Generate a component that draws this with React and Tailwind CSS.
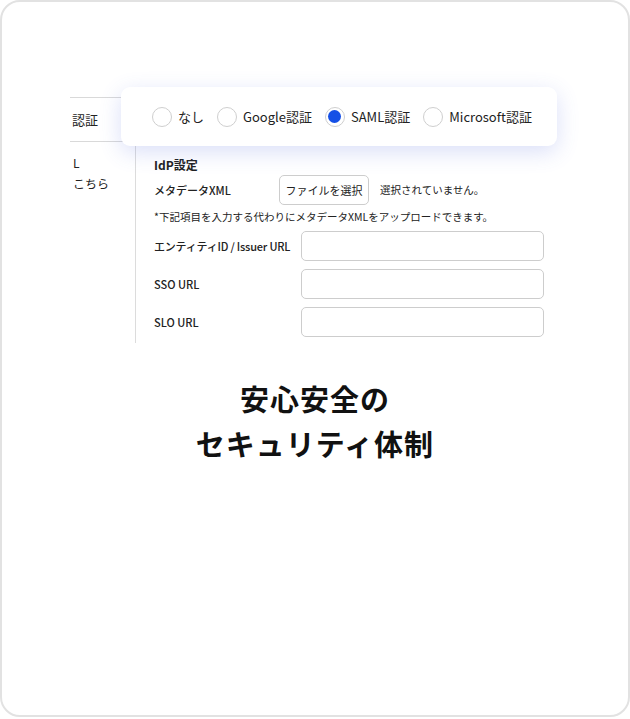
import React from "react";

const font = { fontFamily: '"Noto Sans CJK JP", "Noto Sans", sans-serif' };

const authOptions = [
  { label: "なし", checked: false },
  { label: "Google認証", checked: false },
  { label: "SAML認証", checked: true },
  { label: "Microsoft認証", checked: false },
];

const Radio = ({ checked }) => (
  <span className="w-[20px] h-[20px] rounded-full border-[1.5px] border-[#cfcfcf] bg-white flex items-center justify-center shrink-0">
    {checked && <span className="w-[13px] h-[13px] rounded-full bg-[#1550e6]" />}
  </span>
);

const TextInput = () => (
  <div className="w-[243px] h-[30px] rounded-[5px] border border-[#cdcdcd] bg-white" />
);

export default function App() {
  return (
    <div className="bg-white" style={font}>
      <div className="relative w-[630px] h-[717px] rounded-[20px] border-2 border-[#e2e2e2] bg-white overflow-hidden text-[#222]">
        {/* settings screen (partial) */}
        <div className="pt-[95px] pl-[68px]">
          <div className="w-[80px] h-[45px] border-y border-[#d9d9d9] flex items-center pl-[2px] text-[13px]">
            認証
          </div>

          <div className="flex mt-[3px]">
            <div className="w-[66px] h-[198px] border-r border-[#dcdcdc] pt-[7px] pl-[3px] text-[12px] leading-[21px]">
              <div>L</div>
              <div>こちら</div>
            </div>

            <div className="pl-[18px] pt-[10px] flex flex-col text-[11px] font-medium">
              <div className="h-[20px] flex items-center text-[12px] font-bold">IdP設定</div>

              <div className="flex items-center h-[30px]">
                <span className="w-[125px]">メタデータXML</span>
                <button className="h-[30px] w-[90px] rounded-[5px] border border-[#cdcdcd] bg-white text-[11px] font-normal">
                  ファイルを選択
                </button>
                <span className="ml-[11px] text-[10.5px] font-normal">選択されていません。</span>
              </div>

              <div className="h-[20px] mt-[2px] flex items-center text-[10.5px] font-normal">
                *下記項目を入力する代わりにメタデータXMLをアップロードできます。
              </div>

              <div className="flex items-center mt-[4px]">
                <span className="w-[147px] tracking-[-0.2px]">エンティティID / Issuer URL</span>
                <TextInput />
              </div>
              <div className="flex items-center mt-[8px]">
                <span className="w-[147px]">SSO URL</span>
                <TextInput />
              </div>
              <div className="flex items-center mt-[8px]">
                <span className="w-[147px]">SLO URL</span>
                <TextInput />
              </div>
            </div>
          </div>
        </div>

        {/* auth type popup */}
        <div className="absolute left-[119px] top-[85px] w-[436px] h-[59px] rounded-[9px] bg-white shadow-[0_6px_22px_rgba(70,95,220,0.2)] flex items-center pl-[31px] gap-[13px] text-[13px]">
          {authOptions.map((opt) => (
            <label key={opt.label} className="flex items-center gap-[6px]">
              <Radio checked={opt.checked} />
              <span>{opt.label}</span>
            </label>
          ))}
        </div>

        {/* headline */}
        <div className="mt-[33px] text-center text-[29px] font-bold leading-[45px] tracking-[1px] text-[#111]">
          <div>安心安全の</div>
          <div>セキュリティ体制</div>
        </div>
      </div>
    </div>
  );
}
